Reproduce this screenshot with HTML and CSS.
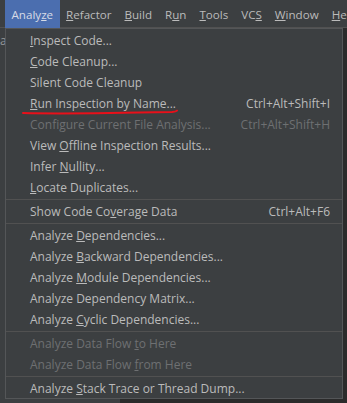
FILE: index.html
```html
<!DOCTYPE html>
<html lang="en">
<head>
    <meta charset="UTF-8">
    <title>Analyze menu</title>
    <link rel="stylesheet" href="styles.css">
</head>
<body>

    <div class="menubar">
        <span class="top active">Analy<u>z</u>e</span>
        <span class="top"><u>R</u>efactor</span>
        <span class="top"><u>B</u>uild</span>
        <span class="top">R<u>u</u>n</span>
        <span class="top"><u>T</u>ools</span>
        <span class="top">VC<u>S</u></span>
        <span class="top"><u>W</u>indow</span>
        <span class="top"><u>H</u>elp</span>
    </div>

    <div class="side">
        <div class="side-tab">a</div>
    </div>

    <div class="popup">
        <div class="item"><span><u>I</u>nspect Code...</span></div>
        <div class="item"><span><u>C</u>ode Cleanup...</span></div>
        <div class="item"><span>Silent Code Cleanup</span></div>
        <div class="item"><span><u>R</u>un Inspection by Name...</span><span class="key">Ctrl+Alt+Shift+I</span></div>
        <div class="item off"><span>Configure Current File Analysis...</span><span class="key">Ctrl+Alt+Shift+H</span></div>
        <div class="item"><span>View <u>O</u>ffline Inspection Results...</span></div>
        <div class="item"><span>Infer <u>N</u>ullity...</span></div>
        <div class="item"><span><u>L</u>ocate Duplicates...</span></div>
        <div class="sep"></div>
        <div class="item"><span>Show Code Co<u>v</u>erage Data</span><span class="key">Ctrl+Alt+F6</span></div>
        <div class="sep"></div>
        <div class="item"><span>Analyze <u>D</u>ependencies...</span></div>
        <div class="item"><span>Analyze <u>B</u>ackward Dependencies...</span></div>
        <div class="item"><span>Analyze <u>M</u>odule Dependencies...</span></div>
        <div class="item"><span>Analyze Dependency Matrix...</span></div>
        <div class="item"><span>Analyze <u>C</u>yclic Dependencies...</span></div>
        <div class="sep"></div>
        <div class="item off"><span>Analyze Data Flow <u>t</u>o Here</span></div>
        <div class="item off"><span>Analyze Data Flow <u>f</u>rom Here</span></div>
        <div class="sep"></div>
        <div class="item"><span>Analyze <u>S</u>tack Trace or Thread Dump...</span></div>

        <!-- red pen mark under "Run Inspection by Name" -->
        <svg class="mark" width="160" height="8" viewBox="0 0 160 8">
            <path d="M1 5 C 40 6, 100 5, 150 4 Q 154 3.6 155 2.6" fill="none" stroke="#e8101a" stroke-width="2" stroke-linecap="round"/>
        </svg>
    </div>

</body>
</html>
```

FILE: styles.css
```css
body { margin: 0; background: #2b2b2b; font-family: "Open Sans", "Noto Sans CJK KR", sans-serif; font-size: 12px; color: #bbbbbb; height: 403px; overflow: hidden; position: relative; }
u { text-decoration-thickness: 1px; text-underline-offset: 1px; }

.menubar { display: flex; height: 28px; background: #3c3f41; border-bottom: 1px solid #515151; padding-left: 5px; box-sizing: border-box; font-size: 11.6px; }
.top { display: flex; align-items: center; padding: 0 6.5px; height: 28px; }
.top.active { background: #4b6eaf; color: #d6dbe6; }

.side { width: 120px; height: 375px; background: #3c3f41; }
.side-tab { width: 5px; height: 20px; padding-top: 4px; overflow: hidden; color: #999; }

.popup { position: absolute; left: 5px; top: 28px; width: 338px; height: 371px; box-sizing: border-box; background: #3c3f41; border: 1px solid #545658; padding-top: 1px; }
.item { display: flex; justify-content: space-between; align-items: center; height: 21px; padding: 0 12px 0 24px; }
.item.off { color: #6e7072; }
.key { color: #bbbbbb; }
.off .key { color: #6e7072; }
.sep { height: 1px; background: #515151; margin: 1px 0; }

.mark { position: absolute; left: 16px; top: 79px; }
```
